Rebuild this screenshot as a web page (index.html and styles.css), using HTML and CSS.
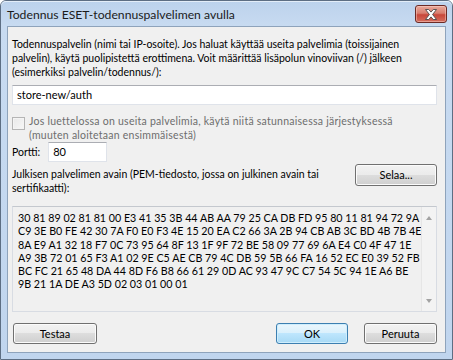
FILE: index.html
```html
<!DOCTYPE html>
<html>

<head>
  <title>Todennus ESET-todennuspalvelimen avulla</title>
  <meta charset="UTF-8">
  <link rel="stylesheet" href="styles.css">
</head>

<body>
  <div class="window">
    <div class="titlebar">
      <span class="title">Todennus ESET-todennuspalvelimen avulla</span>
      <span class="close">
        <svg width="16" height="11" viewBox="0 0 16 11">
          <path d="M2.5 0.5h3.2l2.3 2.6 2.3-2.6h3.2l-3.9 5 3.9 5h-3.2l-2.3-2.6-2.3 2.6h-3.2l3.9-5z" fill="#fff" stroke="#4a4a4a" stroke-width="0.9" stroke-linejoin="round"/>
        </svg>
      </span>
    </div>

    <div class="client">
      <p class="intro">Todennuspalvelin (nimi tai IP-osoite). Jos haluat käyttää useita palvelimia (toissijainen palvelin), käytä puolipistettä erottimena. Voit määrittää lisäpolun vinoviivan (/) jälkeen (esimerkiksi palvelin/todennus/):</p>

      <div class="field server">store-new/auth</div>

      <div class="check-row">
        <span class="checkbox"></span>
        <span class="check-label">Jos luettelossa on useita palvelimia, käytä niitä satunnaisessa järjestyksessä (muuten aloitetaan ensimmäisestä)</span>
      </div>

      <div class="port-row">
        <span class="port-label">Portti:</span>
        <div class="field port">80</div>
      </div>

      <div class="key-row">
        <span class="key-label">Julkisen palvelimen avain (PEM-tiedosto, jossa on julkinen avain tai sertifikaatti):</span>
        <span class="button browse">Selaa...</span>
      </div>

      <div class="keybox">
        <div class="key-text">
          <div>30 81 89 02 81 81 00 E3 41 35 3B 44 AB AA 79 25 CA DB FD 95 80 11 81 94 72 9A</div>
          <div>C9 3E B0 FE 42 30 7A F0 E0 F3 4E 15 20 EA C2 66 3A 2B 94 CB AB 3C BD 4B 7B 4E</div>
          <div>8A E9 A1 32 18 F7 0C 73 95 64 8F 13 1F 9F 72 BE 58 09 77 69 6A E4 C0 4F 47 1E</div>
          <div>A9 3B 72 01 65 F3 A1 02 9E C5 AE CB 79 4C DB 59 5B 66 FA 16 52 EC E0 39 52 FB</div>
          <div>BC FC 21 65 48 DA 44 8D F6 B8 66 61 29 0D AC 93 47 9C C7 54 5C 94 1E A6 BE</div>
          <div>9B 21 1A DE A3 5D 02 03 01 00 01</div>
        </div>
        <div class="scrollbar">
          <span class="arrow up"></span>
          <span class="arrow down"></span>
        </div>
      </div>

      <div class="actions">
        <span class="button test">Testaa</span>
        <span class="spacer"></span>
        <span class="button default">OK</span>
        <span class="button cancel">Peruuta</span>
      </div>
    </div>
  </div>
</body>
</html>
```
FILE: styles.css
```css
*{
  box-sizing:border-box;
}

body{
  margin:0;
  font-family:"Lato", "Liberation Sans", sans-serif;
  font-size:10.5px;
  color:#000;
}

.window{
  width:453px;
  height:360px;
  display:flex;
  flex-direction:column;
  border:1px solid #5d6e83;
  border-radius:6px 6px 0 0;
  background:linear-gradient(to bottom, #bcd2ec 0px, #c8dbf1 26px, #c0d5ee 100%);
}

/* title bar */
.titlebar{
  height:25px;
  display:flex;
  align-items:center;
  justify-content:space-between;
  padding:0 5px 0 6px;
  box-shadow:inset 0 1px 0 #e3edf8;
  border-radius:5px 5px 0 0;
}
.title{
  font-size:12.2px;
  color:#1b1b1b;
  padding-top:1px;
}
.close{
  width:32px;
  height:18px;
  margin-top:1px;
  display:flex;
  align-items:center;
  justify-content:center;
  border:1px solid #6c2a25;
  border-radius:3px;
  background:linear-gradient(to bottom, #e9a99b 0%, #d87e6f 45%, #c8473a 55%, #d46e5e 100%);
  box-shadow:inset 0 0 0 1px rgba(255,220,210,0.45);
}
.close svg{
  display:block;
}

/* client area */
.client{
  flex:1;
  margin:0 6px 6px;
  padding:10px 8px 0 4px;
  display:flex;
  flex-direction:column;
  background:#f0f0f0;
  border:1px solid #8ea3bb;
  line-height:14px;
}

.intro{
  margin:0;
  padding-right:6px;
}

.field{
  height:20px;
  line-height:18px;
  padding:0 4px;
  background:#fff;
  border:1px solid #dfe3ea;
  border-top-color:#abadb3;
  font-size:11px;
}
.server{
  margin-top:6px;
}

.check-row{
  margin-top:8px;
  display:flex;
  align-items:flex-start;
  color:#6d6d6d;
}
.checkbox{
  flex:none;
  width:13px;
  height:13px;
  margin:4px 4px 0 0;
  border:1px solid #b5b5b5;
  background:linear-gradient(to bottom right, #e9e9e9, #f7f7f7);
  box-shadow:inset 0 0 0 1px #f4f4f4;
}
.check-label{
  width:395px;
  padding-top:1px;
  letter-spacing:0.25px;
}

.port-row{
  display:flex;
  align-items:center;
  gap:8px;
}
.port{
  width:59px;
}

.key-row{
  margin-top:2px;
  display:flex;
  align-items:flex-start;
  justify-content:space-between;
}
.key-label{
  width:330px;
  padding-top:3px;
}

/* buttons */
.button{
  height:22px;
  display:flex;
  align-items:center;
  justify-content:center;
  border:1px solid #707070;
  border-radius:3px;
  background:linear-gradient(to bottom, #f2f2f2 0%, #ebebeb 50%, #dddddd 50%, #cfcfcf 100%);
  box-shadow:inset 0 0 0 1px #fbfbfb;
  font-size:11px;
}
.browse{
  width:82px;
}
.test{
  width:84px;
  margin-left:1px;
}
.default{
  width:72px;
  border-color:#3c7fb1;
  background:linear-gradient(to bottom, #eaf6fd 0%, #d9f0fc 50%, #bee6fd 50%, #a7d9f5 100%);
  box-shadow:inset 0 0 0 1px #cfeefd;
}
.cancel{
  width:73px;
  margin-left:16px;
}
.spacer{
  flex:1;
}

/* key text box */
.keybox{
  margin-top:11px;
  height:106px;
  display:flex;
  border:1px solid #d8dce3;
  border-top-color:#c4c8ce;
  background:#f0f0f0;
}
.key-text{
  flex:1;
  padding:4px 0 0 5px;
  font-size:10.7px;
  line-height:13.3px;
  white-space:nowrap;
}
.scrollbar{
  width:17px;
  display:flex;
  flex-direction:column;
  justify-content:space-between;
  align-items:center;
  padding:9px 0 8px;
  border-left:1px solid #e6e6e6;
  background:#f3f3f3;
}
.arrow{
  width:0;
  height:0;
  border-left:3.5px solid transparent;
  border-right:3.5px solid transparent;
}
.arrow.up{
  border-bottom:4px solid #a3a3a3;
}
.arrow.down{
  border-top:4px solid #a3a3a3;
}

.actions{
  margin-top:11px;
  display:flex;
  align-items:center;
}
.actions .button{
  height:21px;
}
```
